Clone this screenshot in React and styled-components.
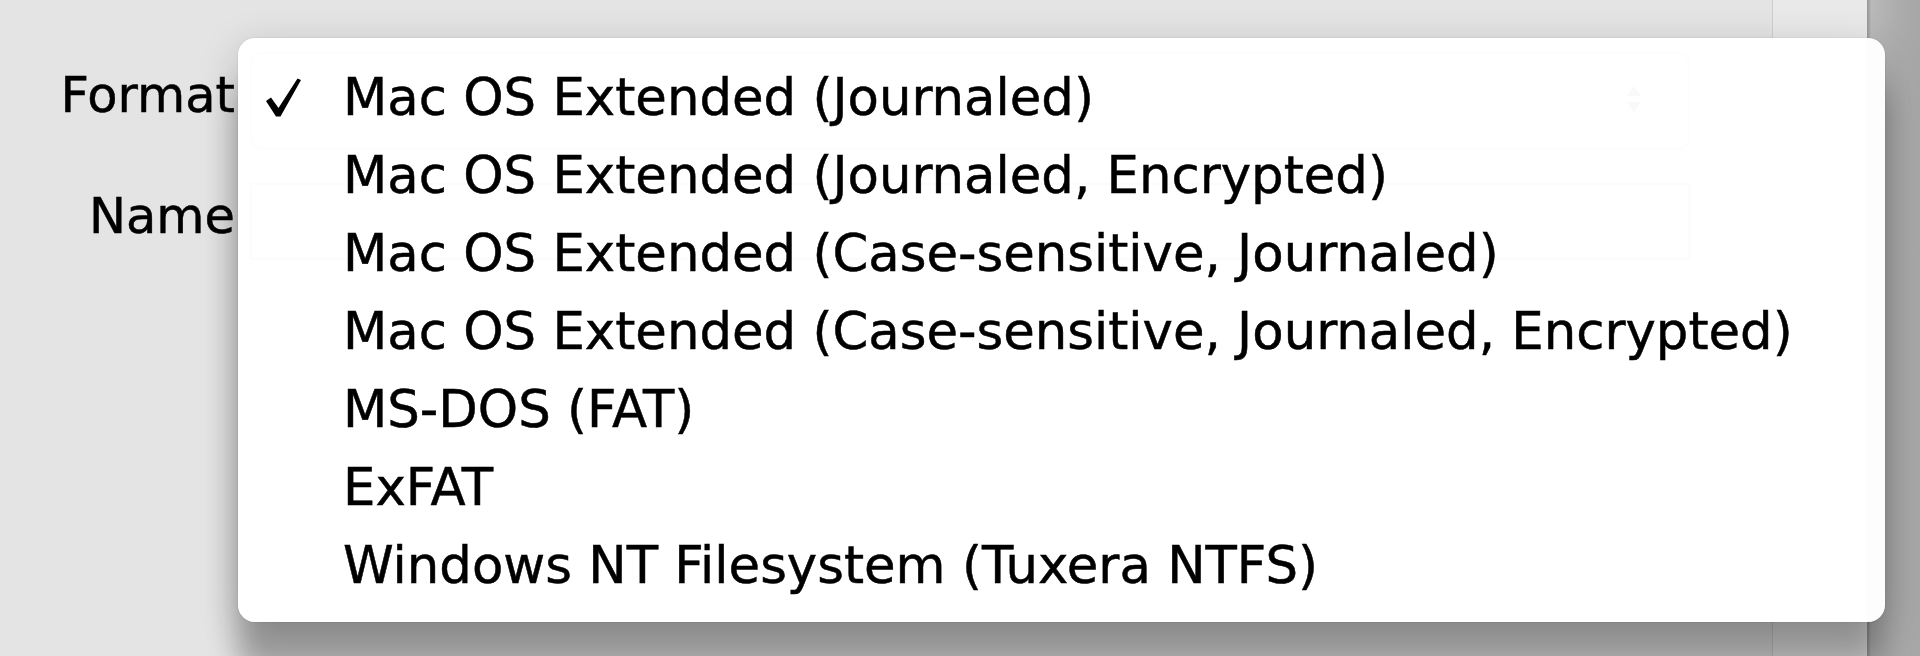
import React from "react";
import styled, { createGlobalStyle } from "styled-components";

const formats = [
  { name: "Mac OS Extended (Journaled)", selected: true },
  { name: "Mac OS Extended (Journaled, Encrypted)" },
  { name: "Mac OS Extended (Case-sensitive, Journaled)" },
  { name: "Mac OS Extended (Case-sensitive, Journaled, Encrypted)" },
  { name: "MS-DOS (FAT)" },
  { name: "ExFAT" },
  { name: "Windows NT Filesystem (Tuxera NTFS)" },
];

export default function App() {
  return (
    <>
      <GlobalStyle />
      <Window>
        <Main>
          <Form>
            <Label>Format</Label>
            <PopupButton>
              <Arrows viewBox="0 0 20 34">
                <path d="M3 14 L10 4 L17 14 Z" />
                <path d="M3 20 L10 30 L17 20 Z" />
              </Arrows>
            </PopupButton>
            <Label>Name</Label>
            <TextField />
          </Form>
        </Main>
        <Divider />
        <Side />
        <Edge />

        <Menu>
          {formats.map((f) => (
            <Item key={f.name}>
              <CheckCell>
                {f.selected && (
                  <CheckMark viewBox="0 0 37 39">
                    <path d="M1 23 L6 19.5 L13.5 30 L32.5 0.5 L36 2 L15.5 38.5 L11 38.5 Z" />
                  </CheckMark>
                )}
              </CheckCell>
              <ItemText>{f.name}</ItemText>
            </Item>
          ))}
        </Menu>
      </Window>
    </>
  );
}

const GlobalStyle = createGlobalStyle`
  html, body {
    margin: 0;
    padding: 0;
    background: #e4e4e4;
    overflow: hidden;
  }
  * {
    box-sizing: border-box;
  }
`;

const Window = styled.div`
  position: relative;
  display: flex;
  width: 1920px;
  height: 656px;
  overflow: hidden;
  font-family: "DejaVu Sans", "Liberation Sans", sans-serif;
  color: #000;
  -webkit-text-stroke: 0.5px #000;
`;

const Main = styled.div`
  flex: 1;
  background: #e4e4e4;
  padding-top: 52px;
`;

const Form = styled.div`
  display: grid;
  grid-template-columns: 250px 1440px;
  grid-template-rows: 98px 77px;
  row-gap: 33px;
  align-items: center;
`;

const Label = styled.div`
  font-size: 49.5px;
  line-height: 1;
  text-align: right;
  padding: 0 15px 10px 0;
  white-space: nowrap;
`;

const PopupButton = styled.div`
  position: relative;
  height: 98px;
  border: 2px solid #b8b8b8;
  border-radius: 12px;
  background: linear-gradient(#ffffff, #e9e9e9);
`;

const Arrows = styled.svg`
  position: absolute;
  right: 44px;
  top: 28px;
  width: 20px;
  height: 34px;
  fill: #444;
`;

const TextField = styled.div`
  height: 77px;
  border: 2px solid #a9a9a9;
  background: #fff;
`;

const Divider = styled.div`
  width: 1px;
  background: #cfcfcf;
`;

const Side = styled.div`
  width: 94px;
  background: #e9e9e9;
`;

const Edge = styled.div`
  width: 53px;
  background: linear-gradient(to right, #959595, #b9b9b9 8%, #acacac 60%, #a6a6a6);
`;

const Menu = styled.div`
  position: absolute;
  left: 238px;
  top: 38px;
  width: 1647px;
  height: 584px;
  padding: 20px 0 18px;
  border-radius: 17px;
  background: rgba(255, 255, 255, 0.97);
  box-shadow: 0 0 2px rgba(0, 0, 0, 0.14), 0 10px 40px rgba(0, 0, 0, 0.18),
    0 50px 30px rgba(0, 0, 0, 0.3);
`;

const Item = styled.div`
  display: flex;
  align-items: center;
  height: 78px;
  line-height: 78px;
  font-size: 51.3px;
  white-space: nowrap;
`;

const CheckCell = styled.span`
  flex: none;
  display: flex;
  align-items: center;
  width: 105px;
  height: 78px;
  padding-left: 27px;
`;

const CheckMark = styled.svg`
  width: 37px;
  height: 39px;
  fill: #000;
`;

const ItemText = styled.span`
  flex: none;
`;
